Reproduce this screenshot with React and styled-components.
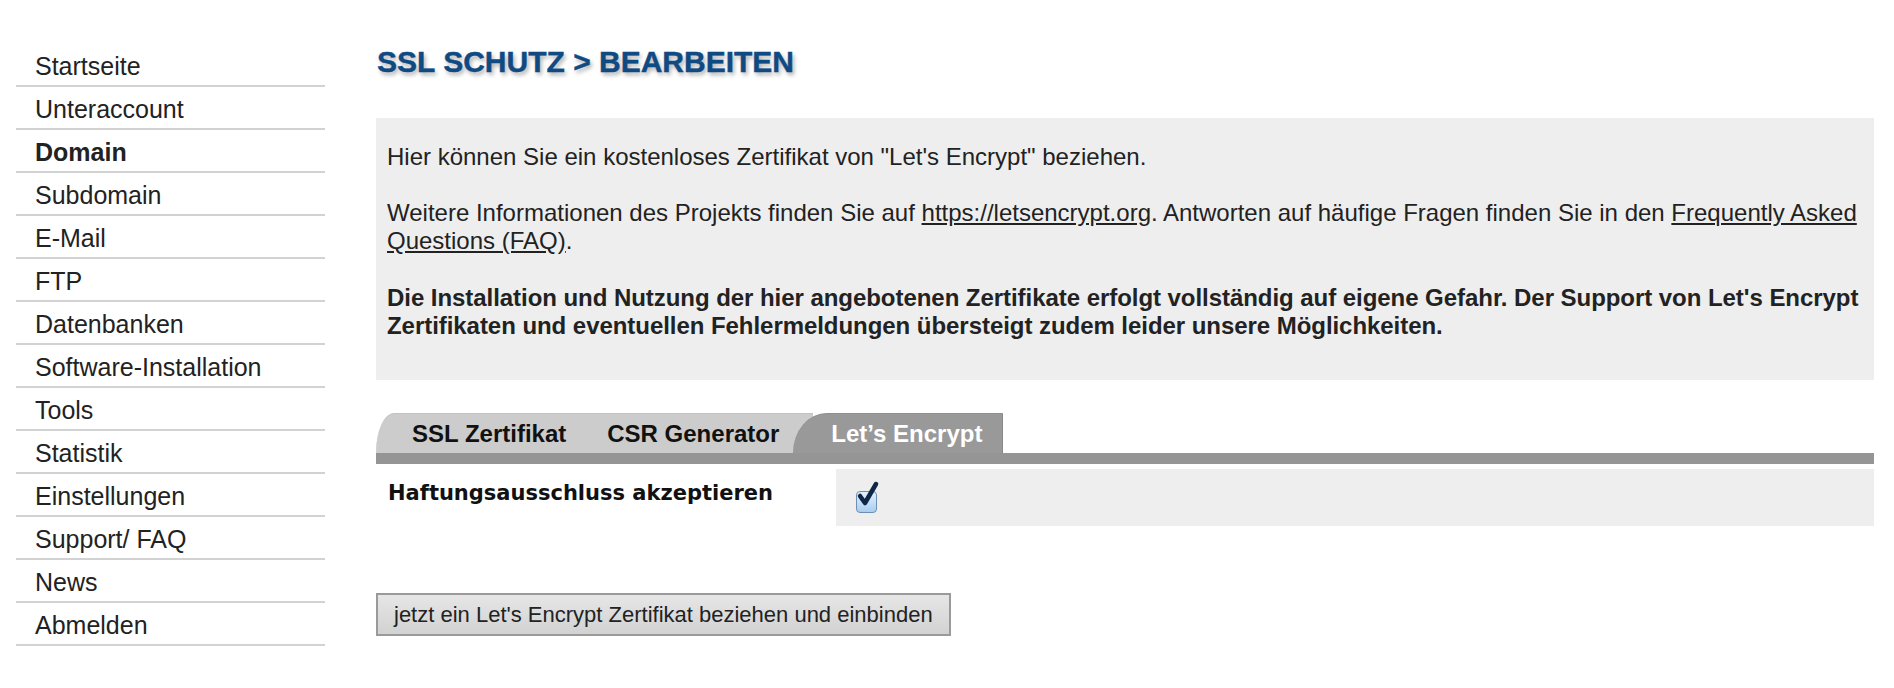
import React from 'react';
import styled, {createGlobalStyle} from 'styled-components';

const GlobalStyle = createGlobalStyle`
	html, body {
		margin: 0;
		padding: 0;
		background: #fff;
	}

	body {
		font-family: "Liberation Sans", Arial, sans-serif;
		color: #222;
	}
`;

const menu = [
	{label : 'Startseite'},
	{label : 'Unteraccount'},
	{label : 'Domain', active : true},
	{label : 'Subdomain'},
	{label : 'E-Mail'},
	{label : 'FTP'},
	{label : 'Datenbanken'},
	{label : 'Software-Installation'},
	{label : 'Tools'},
	{label : 'Statistik'},
	{label : 'Einstellungen'},
	{label : 'Support/ FAQ'},
	{label : 'News'},
	{label : 'Abmelden'},
];

const Checkmark = () => (
	<svg width="26" height="30" viewBox="0 0 26 30">
		<path
			d="M5 17 L10 24 L21 5"
			fill="none"
			stroke="#0f2746"
			strokeWidth="4.5"
			strokeLinecap="round"
			strokeLinejoin="round"
		/>
	</svg>
);

export default function App() {
	return (
		<>
			<GlobalStyle />
			<Page>
				<Sidebar>
					{menu.map((item) => (
						<MenuItem key={item.label} $active={item.active}>
							{item.label}
						</MenuItem>
					))}
				</Sidebar>

				<Main>
					<Title>SSL SCHUTZ &gt; BEARBEITEN</Title>

					<InfoBox>
						<p>
							Hier können Sie ein kostenloses Zertifikat von "Let's
							Encrypt" beziehen.
						</p>
						<p>
							Weitere Informationen des Projekts finden Sie auf{' '}
							<a href="#le">https://letsencrypt.org</a>. Antworten auf
							häufige Fragen finden Sie in den{' '}
							<a href="#faq">Frequently Asked Questions (FAQ)</a>.
						</p>
						<p className="warn">
							Die Installation und Nutzung der hier angebotenen
							Zertifikate erfolgt vollständig auf eigene Gefahr. Der
							Support von Let's Encrypt Zertifikaten und eventuellen
							Fehlermeldungen übersteigt zudem leider unsere
							Möglichkeiten.
						</p>
					</InfoBox>

					<Tabs>
						<Tab $first>SSL Zertifikat</Tab>
						<Tab $last>CSR Generator</Tab>
						<Tab $active>Let’s Encrypt</Tab>
					</Tabs>
					<TabLine />

					<FormRow>
						<Label>Haftungsausschluss akzeptieren</Label>
						<Field>
							<CheckBox>
								<Checkmark />
							</CheckBox>
						</Field>
					</FormRow>

					<SubmitButton type="button">
						jetzt ein Let's Encrypt Zertifikat beziehen und einbinden
					</SubmitButton>
				</Main>
			</Page>
		</>
	);
}

const Page = styled.div`
	display: flex;
	align-items: flex-start;
	gap: 51px;
	width: 1894px;
	height: 688px;
	box-sizing: border-box;
	padding: 44px 20px 0 16px;
`;

const Sidebar = styled.nav`
	display: flex;
	flex-direction: column;
	width: 309px;
	flex-shrink: 0;
`;

const MenuItem = styled.div`
	padding: 4px 0 0 19px;
	line-height: 37px;
	font-size: 25px;
	font-weight: ${({$active}) => ($active ? 700 : 400)};
	color: #222;
	border-bottom: 2px solid #d2d2d2;
`;

const Main = styled.main`
	display: flex;
	flex-direction: column;
	flex: 1;
	min-width: 0;
`;

const Title = styled.h1`
	margin: 0 0 38px 1px;
	font-size: 30px;
	line-height: 36px;
	font-weight: 700;
	color: #0f4a83;
	-webkit-text-stroke: 0.4px #0f4a83;
	text-shadow: 2px 3px 4px rgba(0, 0, 0, 0.32);
`;

const InfoBox = styled.div`
	background: #eeeeee;
	padding: 25px 10px 40px 11px;
	font-size: 24px;
	line-height: 28px;
	letter-spacing: 0;

	p {
		margin: 0 0 28px;
	}

	p:last-child {
		margin-bottom: 0;
	}

	a {
		color: #222;
		text-decoration: underline;
	}

	.warn {
		font-weight: 700;
		letter-spacing: -0.05px;
		margin-top: 29px;
	}
`;

const Tabs = styled.div`
	display: flex;
	align-items: flex-end;
	height: 40px;
	margin-top: 33px;
`;

const Tab = styled.div`
	position: relative;
	height: 40px;
	box-sizing: border-box;
	display: flex;
	align-items: center;
	font-size: 24px;
	font-weight: 700;
	background: ${({$active}) => ($active ? '#999999' : '#cccccc')};
	color: ${({$active}) => ($active ? '#fff' : '#111')};
	padding: ${({$first, $last, $active}) =>
		$first ? '0 23px 0 36px' : $last ? '0 34px 0 18px' : $active ? '0 20px 0 38px' : '0'};
	margin-left: ${({$active}) => ($active ? '-20px' : '0')};
	border-top-left-radius: ${({$first, $active}) =>
		$first ? '18px 40px' : $active ? '34px 40px' : '0'};
	border-top: 1px solid ${({$active}) => ($active ? '#8f8f8f' : '#c2c2c2')};
	border-right: ${({$active}) => ($active ? '1px solid #888' : 'none')};
	z-index: ${({$active}) => ($active ? 1 : 0)};
`;

const TabLine = styled.div`
	height: 11px;
	background: #959595;
`;

const FormRow = styled.div`
	display: flex;
	margin-top: 5px;
	height: 57px;
`;

const Label = styled.div`
	width: 460px;
	box-sizing: border-box;
	padding: 12px 0 0 12px;
	font-family: "DejaVu Sans", Verdana, sans-serif;
	font-size: 21px;
	font-weight: 700;
	color: #111;
`;

const Field = styled.div`
	flex: 1;
	display: flex;
	align-items: center;
	padding-left: 20px;
	background: #eeeeee;
`;

const CheckBox = styled.span`
	position: relative;
	display: inline-block;
	width: 19px;
	height: 20px;
	margin-top: 8px;
	border: 1px solid #6d8fb3;
	border-radius: 4px;
	background: linear-gradient(#e4f0fb, #a9cdf0);

	svg {
		position: absolute;
		left: -2px;
		top: -13px;
	}
`;

const SubmitButton = styled.button`
	align-self: flex-start;
	margin-top: 67px;
	height: 43px;
	padding: 0 16px;
	font-family: "Liberation Sans", Arial, sans-serif;
	font-size: 22px;
	color: #222;
	background: linear-gradient(#e6e6e6, #d2d2d2);
	border: 2px solid #9a9a9a;
	border-radius: 0;
`;
